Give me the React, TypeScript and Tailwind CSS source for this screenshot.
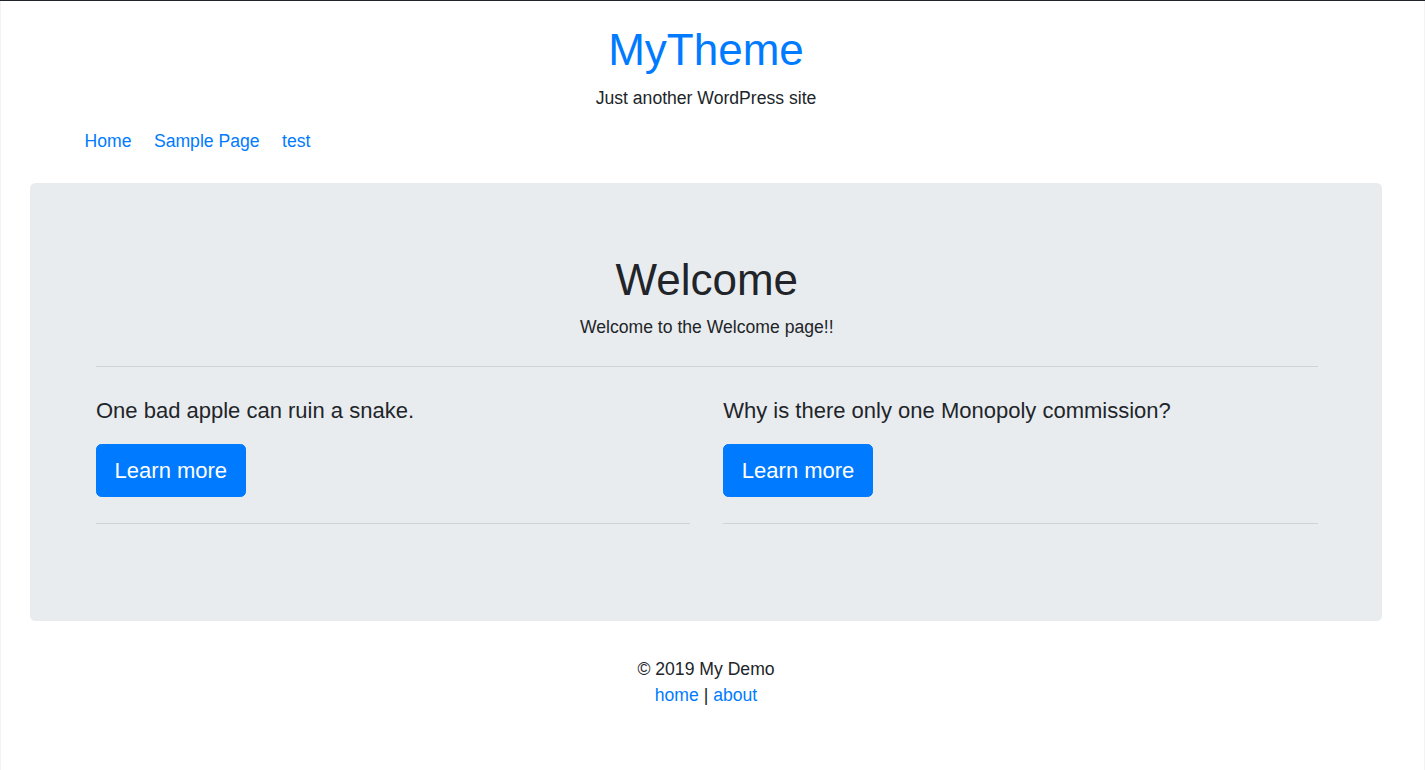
export default function App() {
  const features = [
    { text: "One bad apple can ruin a snake." },
    { text: "Why is there only one Monopoly commission?" },
  ]

  return (
    <div
      className="min-h-[770px] w-[1425px] border-t border-[#212529] bg-white text-[17.6px] leading-[1.5] text-[#212529]"
      style={{ fontFamily: '"Liberation Sans", Arial, sans-serif' }}
    >
      <div className="flex min-h-[769px] border-x border-[#f3f3f3]">
        <div className="w-[1410px]">
          {/* Header */}
          <header className="pt-[22.5px] text-center">
            <h1 className="text-[44px] leading-[1.2] text-[#007bff]">
              <a href="#">MyTheme</a>
            </h1>
            <p className="mt-[8.5px]">Just another WordPress site</p>
          </header>

          {/* Nav */}
          <nav className="mt-[16.5px] flex gap-[22.5px] pl-[83.5px]">
            <a href="#" className="text-[#007bff]">Home</a>
            <a href="#" className="text-[#007bff]">Sample Page</a>
            <a href="#" className="text-[#007bff]">test</a>
          </nav>

          {/* Jumbotron */}
          <main className="mx-[29px] mt-[29px] rounded-[5.28px] bg-[#e9ecef] pl-[66px] pr-[64.5px] pt-[70.5px] pb-[97px]">
            <h2 className="text-center text-[44px] leading-[1.2]">Welcome</h2>
            <p className="mt-[7.5px] text-center">Welcome to the Welcome page!!</p>
            <hr className="mt-[26px] border-black/10" />

            <div className="mt-[30.5px] grid grid-cols-2 gap-x-[33px]">
              {features.map((item, i) => (
                <div key={i}>
                  <h5 className="text-[22px] leading-[1.2]">{item.text}</h5>
                  <a
                    href="#"
                    className="mt-[20px] inline-block rounded-[5.28px] border border-[#007bff] bg-[#007bff] px-[17.6px] py-[8.8px] text-[22px] leading-[1.5] text-white"
                  >
                    Learn more
                  </a>
                  <hr className="mt-[26.5px] border-black/10" />
                </div>
              ))}
            </div>
          </main>

          {/* Footer */}
          <footer className="mt-[34.5px] text-center">
            <p>© 2019 My Demo</p>
            <p>
              <a href="#" className="text-[#007bff]">home</a> |{" "}
              <a href="#" className="text-[#007bff]">about</a>
            </p>
          </footer>
        </div>
      </div>
    </div>
  )
}
